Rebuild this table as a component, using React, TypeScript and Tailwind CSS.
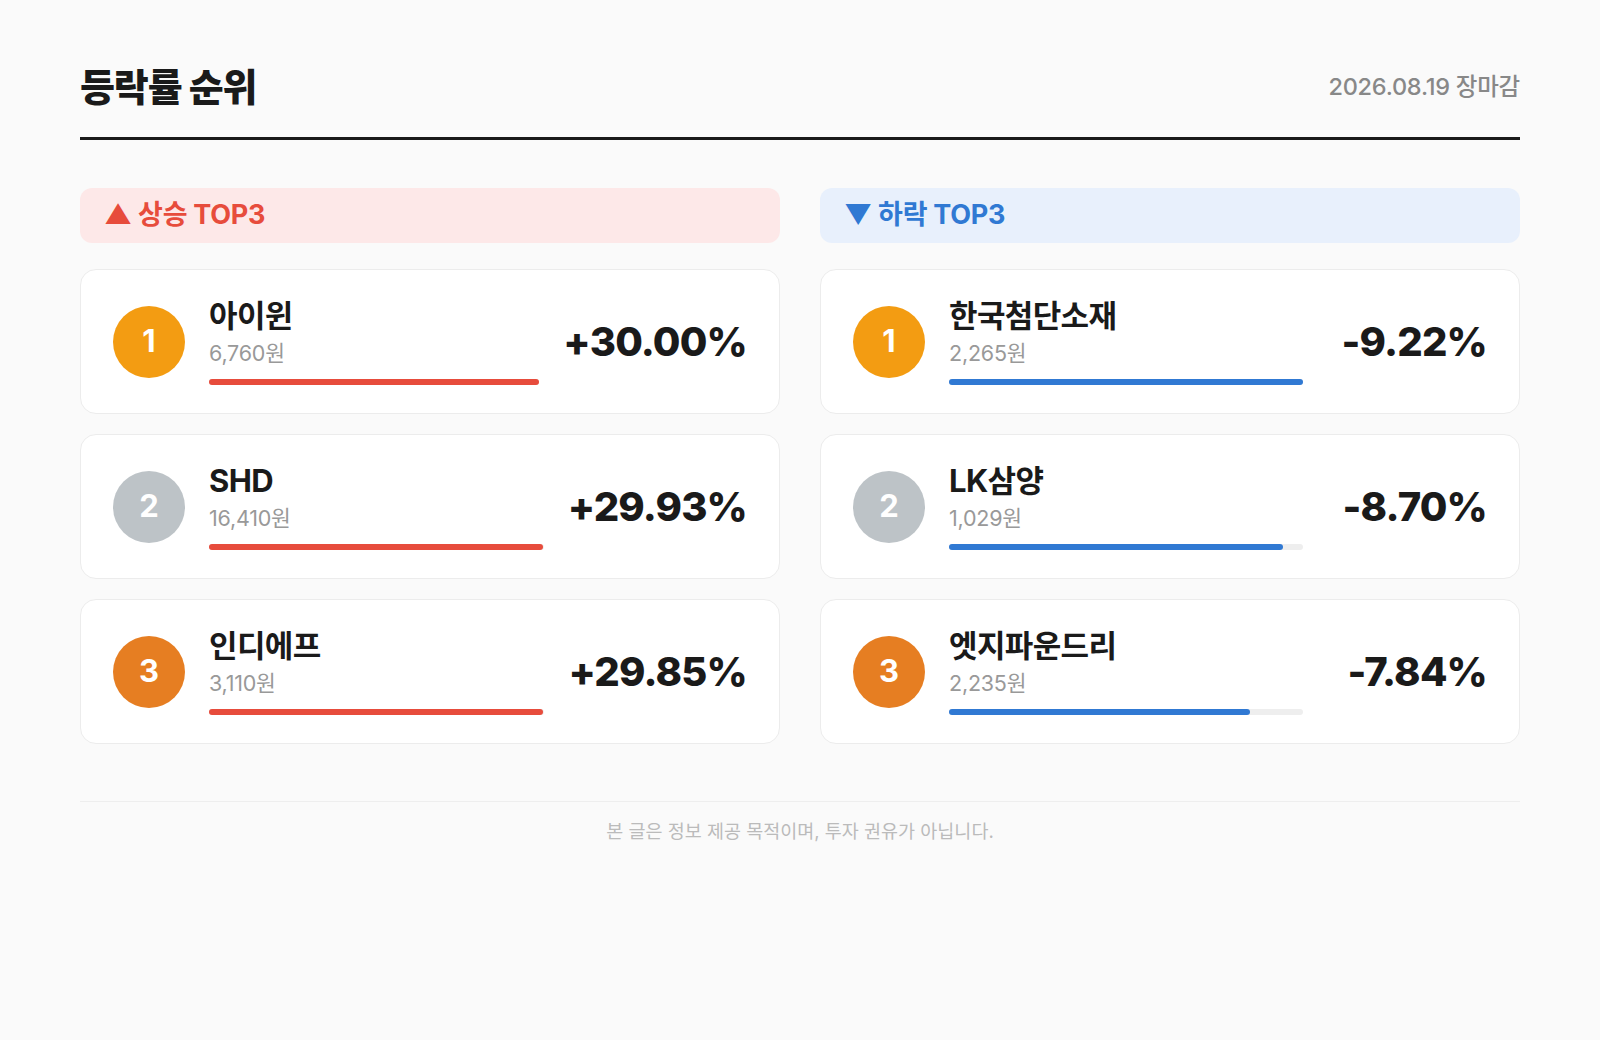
import React from "react";

type Stock = {
  rank: number;
  name: string;
  price: string;
  rate: number;
};

const RISERS: Stock[] = [
  { rank: 1, name: "아이윈", price: "6,760원", rate: 30.0 },
  { rank: 2, name: "SHD", price: "16,410원", rate: 29.93 },
  { rank: 3, name: "인디에프", price: "3,110원", rate: 29.85 },
];

const FALLERS: Stock[] = [
  { rank: 1, name: "한국첨단소재", price: "2,265원", rate: -9.22 },
  { rank: 2, name: "LK삼양", price: "1,029원", rate: -8.7 },
  { rank: 3, name: "엣지파운드리", price: "2,235원", rate: -7.84 },
];

const RANK_BG: Record<number, string> = {
  1: "bg-[#f39c12]",
  2: "bg-[#bdc3c7]",
  3: "bg-[#e67e22]",
};

const StockCard = ({ stock, max, up }: { stock: Stock; max: number; up: boolean }) => {
  const pct = (Math.abs(stock.rate) / max) * 100;
  const label = (up ? "+" : "") + stock.rate.toFixed(2) + "%";
  return (
    <div className="flex h-[145px] items-center gap-6 rounded-2xl border border-[#ececec] bg-white px-8">
      <div
        className={`flex h-[72px] w-[72px] shrink-0 items-center justify-center rounded-full text-[31px] font-bold text-white ${RANK_BG[stock.rank]}`}
      >
        {stock.rank}
      </div>
      <div className="flex min-w-0 flex-1 flex-col">
        <div className="text-[31px] font-bold leading-[36px] tracking-[-0.02em] text-[#1a1a1a]">
          {stock.name}
        </div>
        <div className="mt-[4px] text-[21.5px] leading-[30px] tracking-[-0.01em] text-[#999]">{stock.price}</div>
        <div className="mt-[11px] h-[6px] w-full rounded-full bg-[#eeeeee]">
          <div
            className={`h-full rounded-full ${up ? "bg-[#e74c3c]" : "bg-[#3079d3]"}`}
            style={{ width: `${pct}%` }}
          />
        </div>
      </div>
      <div className="min-w-[160px] text-right text-[40px] font-extrabold tracking-[-0.02em] text-[#1a1a1a]">
        {label}
      </div>
    </div>
  );
};

const Column = ({ up, items }: { up: boolean; items: Stock[] }) => {
  const max = Math.max(...items.map(s => Math.abs(s.rate)));
  return (
    <div className="flex flex-col">
      <div
        className={`flex h-[55px] items-center rounded-xl px-6 text-[27px] font-bold tracking-[-0.01em] ${
          up ? "bg-[#fde8e8] text-[#e74c3c]" : "bg-[#e8f0fc] text-[#3079d3]"
        }`}
      >
        {up ? "▲ 상승 TOP3" : "▼ 하락 TOP3"}
      </div>
      <div className="mt-[26px] flex flex-col gap-5">
        {items.map(s => (
          <StockCard key={s.rank} stock={s} max={max} up={up} />
        ))}
      </div>
    </div>
  );
};

export default function App() {
  return (
    <div
      className="min-h-[1040px] bg-[#fafafa] px-20 pt-[64px]"
      style={{ fontFamily: 'Inter, "Noto Sans CJK KR", sans-serif' }}
    >
      <header className="flex items-end justify-between border-b-[3px] border-[#1a1a1a] pb-[27px]">
        <h1 className="text-[38px] font-extrabold leading-[46px] tracking-[-0.03em] text-[#1a1a1a]">
          등락률 순위
        </h1>
        <div className="pb-[6px] text-[23.5px] font-medium tracking-[-0.01em] text-[#888]">2026.08.19 장마감</div>
      </header>

      <div className="mt-12 grid grid-cols-2 gap-10">
        <Column up items={RISERS} />
        <Column up={false} items={FALLERS} />
      </div>

      <footer className="mt-[57px] border-t border-[#eeeeee] pt-[16px] text-center text-[18.5px] text-[#bbbbbb]">
        본 글은 정보 제공 목적이며, 투자 권유가 아닙니다.
      </footer>
    </div>
  );
}
